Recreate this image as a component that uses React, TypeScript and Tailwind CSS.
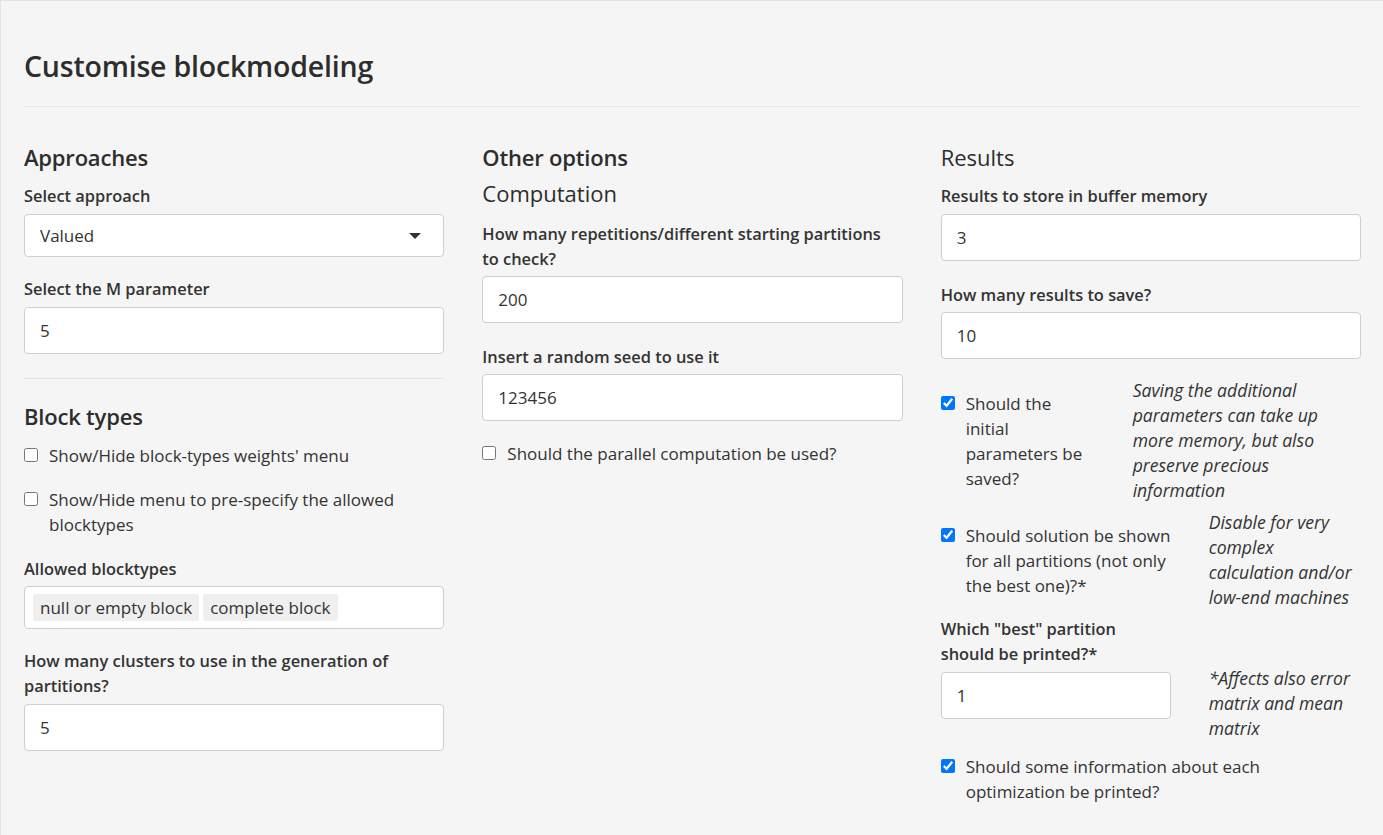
import React from "react";

const font = { fontFamily: '"Open Sans", "Noto Sans", sans-serif' };

function Label({ children, className = "" }: { children: React.ReactNode; className?: string }) {
  return <div className={"font-semibold text-[16.4px] leading-[25px] whitespace-nowrap " + className}>{children}</div>;
}

function TextInput({ value, className = "" }: { value: string; className?: string }) {
  return (
    <div className={"h-[47px] rounded-[4px] border border-[#cfcfcf] bg-white pl-[15px] flex items-center text-[17px] " + className}>
      {value}
    </div>
  );
}

function Check({ checked, children, className = "" }: { checked?: boolean; children: React.ReactNode; className?: string }) {
  return (
    <label className={"flex items-start gap-[11px] text-[17px] leading-[25px] " + className}>
      <input type="checkbox" defaultChecked={checked} className="w-[14px] h-[14px] m-0 mt-[5px] shrink-0" />
      <span className="whitespace-nowrap">{children}</span>
    </label>
  );
}

function H4Bold({ children, className = "" }: { children: React.ReactNode; className?: string }) {
  return <div className={"text-[22px] leading-[29px] font-semibold text-[#2d2d2d] tracking-[-0.2px] " + className}>{children}</div>;
}

function H4Light({ children, className = "" }: { children: React.ReactNode; className?: string }) {
  return <div className={"text-[22px] leading-[29px] font-normal text-[#2d2d2d] " + className}>{children}</div>;
}

function Help({ children, className = "" }: { children: React.ReactNode; className?: string }) {
  return <div className={"flex-1 italic text-[17.6px] leading-[25px] whitespace-nowrap " + className}>{children}</div>;
}

export default function App() {
  return (
    <div style={font} className="min-h-[835px] w-[1383px] bg-[#f5f5f5] border-t border-l border-[#e3e3e3] text-[#333] pl-[23px] pr-[22px] pt-[45px]">
      <div className="text-[28.5px] leading-[40px] font-semibold text-[#2d2d2d] tracking-[-0.2px]">Customise blockmodeling</div>
      <div className="mt-[20px] border-t border-[#e6e6e6]" />

      <div className="grid grid-cols-3 gap-[38px] pt-[36px]">
        {/* Column 1 */}
        <div className="flex flex-col">
          <H4Bold>Approaches</H4Bold>
          <Label className="mt-[11px]">Select approach</Label>
          <div className="mt-[6px] h-[43px] rounded-[4px] border border-[#cfcfcf] bg-white pl-[15px] pr-[22px] flex items-center justify-between text-[17px]">
            <span>Valued</span>
            <svg width="12" height="6" viewBox="0 0 12 6">
              <path d="M0 0 L12 0 L6 6 Z" fill="#333" />
            </svg>
          </div>
          <Label className="mt-[19px]">Select the M parameter</Label>
          <TextInput value="5" className="mt-[6px]" />
          <div className="mt-[24px] border-t border-[#e3e3e3]" />
          <H4Bold className="mt-[23px]">Block types</H4Bold>
          <Check className="mt-[12px]">Show/Hide block-types weights' menu</Check>
          <Check className="mt-[19px]">
            Show/Hide menu to pre-specify the allowed
            <br />
            blocktypes
          </Check>
          <Label className="mt-[19px]">Allowed blocktypes</Label>
          <div className="mt-[5px] h-[43px] rounded-[4px] border border-[#cfcfcf] bg-white pl-[8px] flex items-center gap-[4px] text-[17px]">
            <span className="h-[27px] px-[7px] rounded-[3px] bg-[#efefef] flex items-center">null or empty block</span>
            <span className="h-[27px] px-[7px] rounded-[3px] bg-[#efefef] flex items-center">complete block</span>
          </div>
          <Label className="mt-[19px]">
            How many clusters to use in the generation of
            <br />
            partitions?
          </Label>
          <TextInput value="5" className="mt-[6px]" />
        </div>

        {/* Column 2 */}
        <div className="flex flex-col">
          <H4Bold>Other options</H4Bold>
          <H4Light className="mt-[7px]">Computation</H4Light>
          <Label className="mt-[13px]">
            How many repetitions/different starting partitions
            <br />
            to check?
          </Label>
          <TextInput value="200" className="mt-[5px]" />
          <Label className="mt-[21px]">Insert a random seed to use it</Label>
          <TextInput value="123456" className="mt-[5px]" />
          <Check className="mt-[20px]">Should the parallel computation be used?</Check>
        </div>

        {/* Column 3 */}
        <div className="flex flex-col">
          <H4Light>Results</H4Light>
          <Label className="mt-[11px]">Results to store in buffer memory</Label>
          <TextInput value="3" className="mt-[6px]" />
          <Label className="mt-[21px]">How many results to save?</Label>
          <TextInput value="10" className="mt-[5px]" />

          <div className="mt-[19px] flex items-center gap-[38px]">
            <div className="w-[154px] shrink-0">
              <Check checked>
                Should the
                <br />
                initial
                <br />
                parameters be
                <br />
                saved?
              </Check>
            </div>
            <Help>
              Saving the additional
              <br />
              parameters can take up
              <br />
              more memory, but also
              <br />
              preserve precious
              <br />
              information
            </Help>
          </div>

          <div className="mt-[7px] flex items-center gap-[38px]">
            <div className="w-[230px] shrink-0">
              <Check checked>
                Should solution be shown
                <br />
                for all partitions (not only
                <br />
                the best one)?*
              </Check>
            </div>
            <Help>
              Disable for very
              <br />
              complex
              <br />
              calculation and/or
              <br />
              low-end machines
            </Help>
          </div>

          <div className="mt-[6px] flex items-start gap-[38px]">
            <div className="w-[230px] shrink-0 flex flex-col">
              <Label>
                Which "best" partition
                <br />
                should be printed?*
              </Label>
              <TextInput value="1" className="mt-[6px]" />
            </div>
            <Help className="pt-[50px]">
              *Affects also error
              <br />
              matrix and mean
              <br />
              matrix
            </Help>
          </div>

          <Check checked className="mt-[13px]">
            Should some information about each
            <br />
            optimization be printed?
          </Check>
        </div>
      </div>
    </div>
  );
}
